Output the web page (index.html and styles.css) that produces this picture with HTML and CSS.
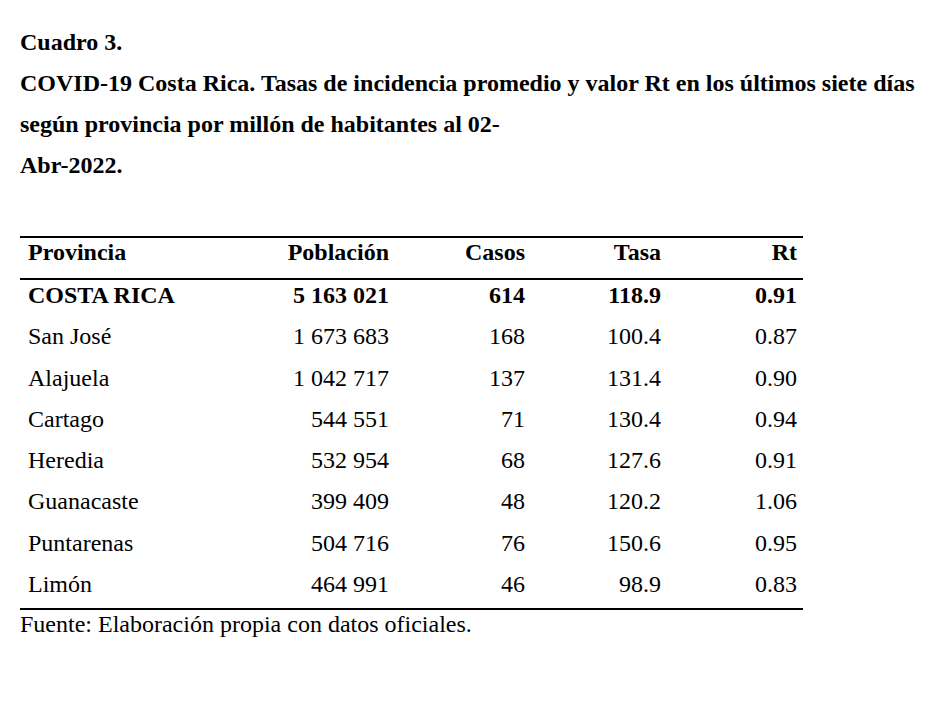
FILE: index.html
```html
<!DOCTYPE html>
<html lang="es">
<head>
<meta charset="utf-8">
<link rel="stylesheet" href="styles.css">
</head>
<body>
<div class="page">
  <h1 class="title">Cuadro 3.<br>COVID-19 Costa Rica. Tasas de incidencia promedio y valor Rt en los últimos siete días<br>según provincia por millón de habitantes al 02-<br>Abr-2022.</h1>
  <table class="data">
    <thead>
      <tr><th class="l">Provincia</th><th>Población</th><th>Casos</th><th>Tasa</th><th>Rt</th></tr>
    </thead>
    <tbody>
      <tr class="total"><td class="l">COSTA RICA</td><td>5 163 021</td><td>614</td><td>118.9</td><td>0.91</td></tr>
      <tr><td class="l">San José</td><td>1 673 683</td><td>168</td><td>100.4</td><td>0.87</td></tr>
      <tr><td class="l">Alajuela</td><td>1 042 717</td><td>137</td><td>131.4</td><td>0.90</td></tr>
      <tr><td class="l">Cartago</td><td>544 551</td><td>71</td><td>130.4</td><td>0.94</td></tr>
      <tr><td class="l">Heredia</td><td>532 954</td><td>68</td><td>127.6</td><td>0.91</td></tr>
      <tr><td class="l">Guanacaste</td><td>399 409</td><td>48</td><td>120.2</td><td>1.06</td></tr>
      <tr><td class="l">Puntarenas</td><td>504 716</td><td>76</td><td>150.6</td><td>0.95</td></tr>
      <tr class="last"><td class="l">Limón</td><td>464 991</td><td>46</td><td>98.9</td><td>0.83</td></tr>
    </tbody>
  </table>
  <p class="source">Fuente: Elaboración propia con datos oficiales.</p>
</div>
</body>
</html>
```

FILE: styles.css
```css
html, body {
  margin: 0;
  padding: 0;
  background: #fff;
}
body {
  font-family: "Liberation Serif", "Times New Roman", serif;
  color: #000;
  font-size: 24px;
}
.page {
  padding: 22px 0 0 20px;
}
.title {
  margin: 0;
  font-size: 24px;
  font-weight: bold;
  line-height: 41px;
  white-space: nowrap;
}
.data {
  margin-top: 50px;
  width: 783px;
  border-collapse: separate;
  border-spacing: 0;
  border-top: 2px solid #000;
  border-bottom: 2px solid #000;
}
.data th, .data td {
  padding: 1px 6px 12.3px 8px;
  line-height: 28px;
  text-align: right;
  vertical-align: top;
  width: 122px;
  white-space: nowrap;
}
.data th.l, .data td.l {
  text-align: left;
  width: auto;
}
.data th {
  font-weight: bold;
  padding-top: 0;
  padding-bottom: 12px;
  border-bottom: 2px solid #000;
}
.data .last td {
  padding-bottom: 10px;
}
.total td {
  font-weight: bold;
}
.source {
  margin: 0;
  line-height: 28px;
}
```
